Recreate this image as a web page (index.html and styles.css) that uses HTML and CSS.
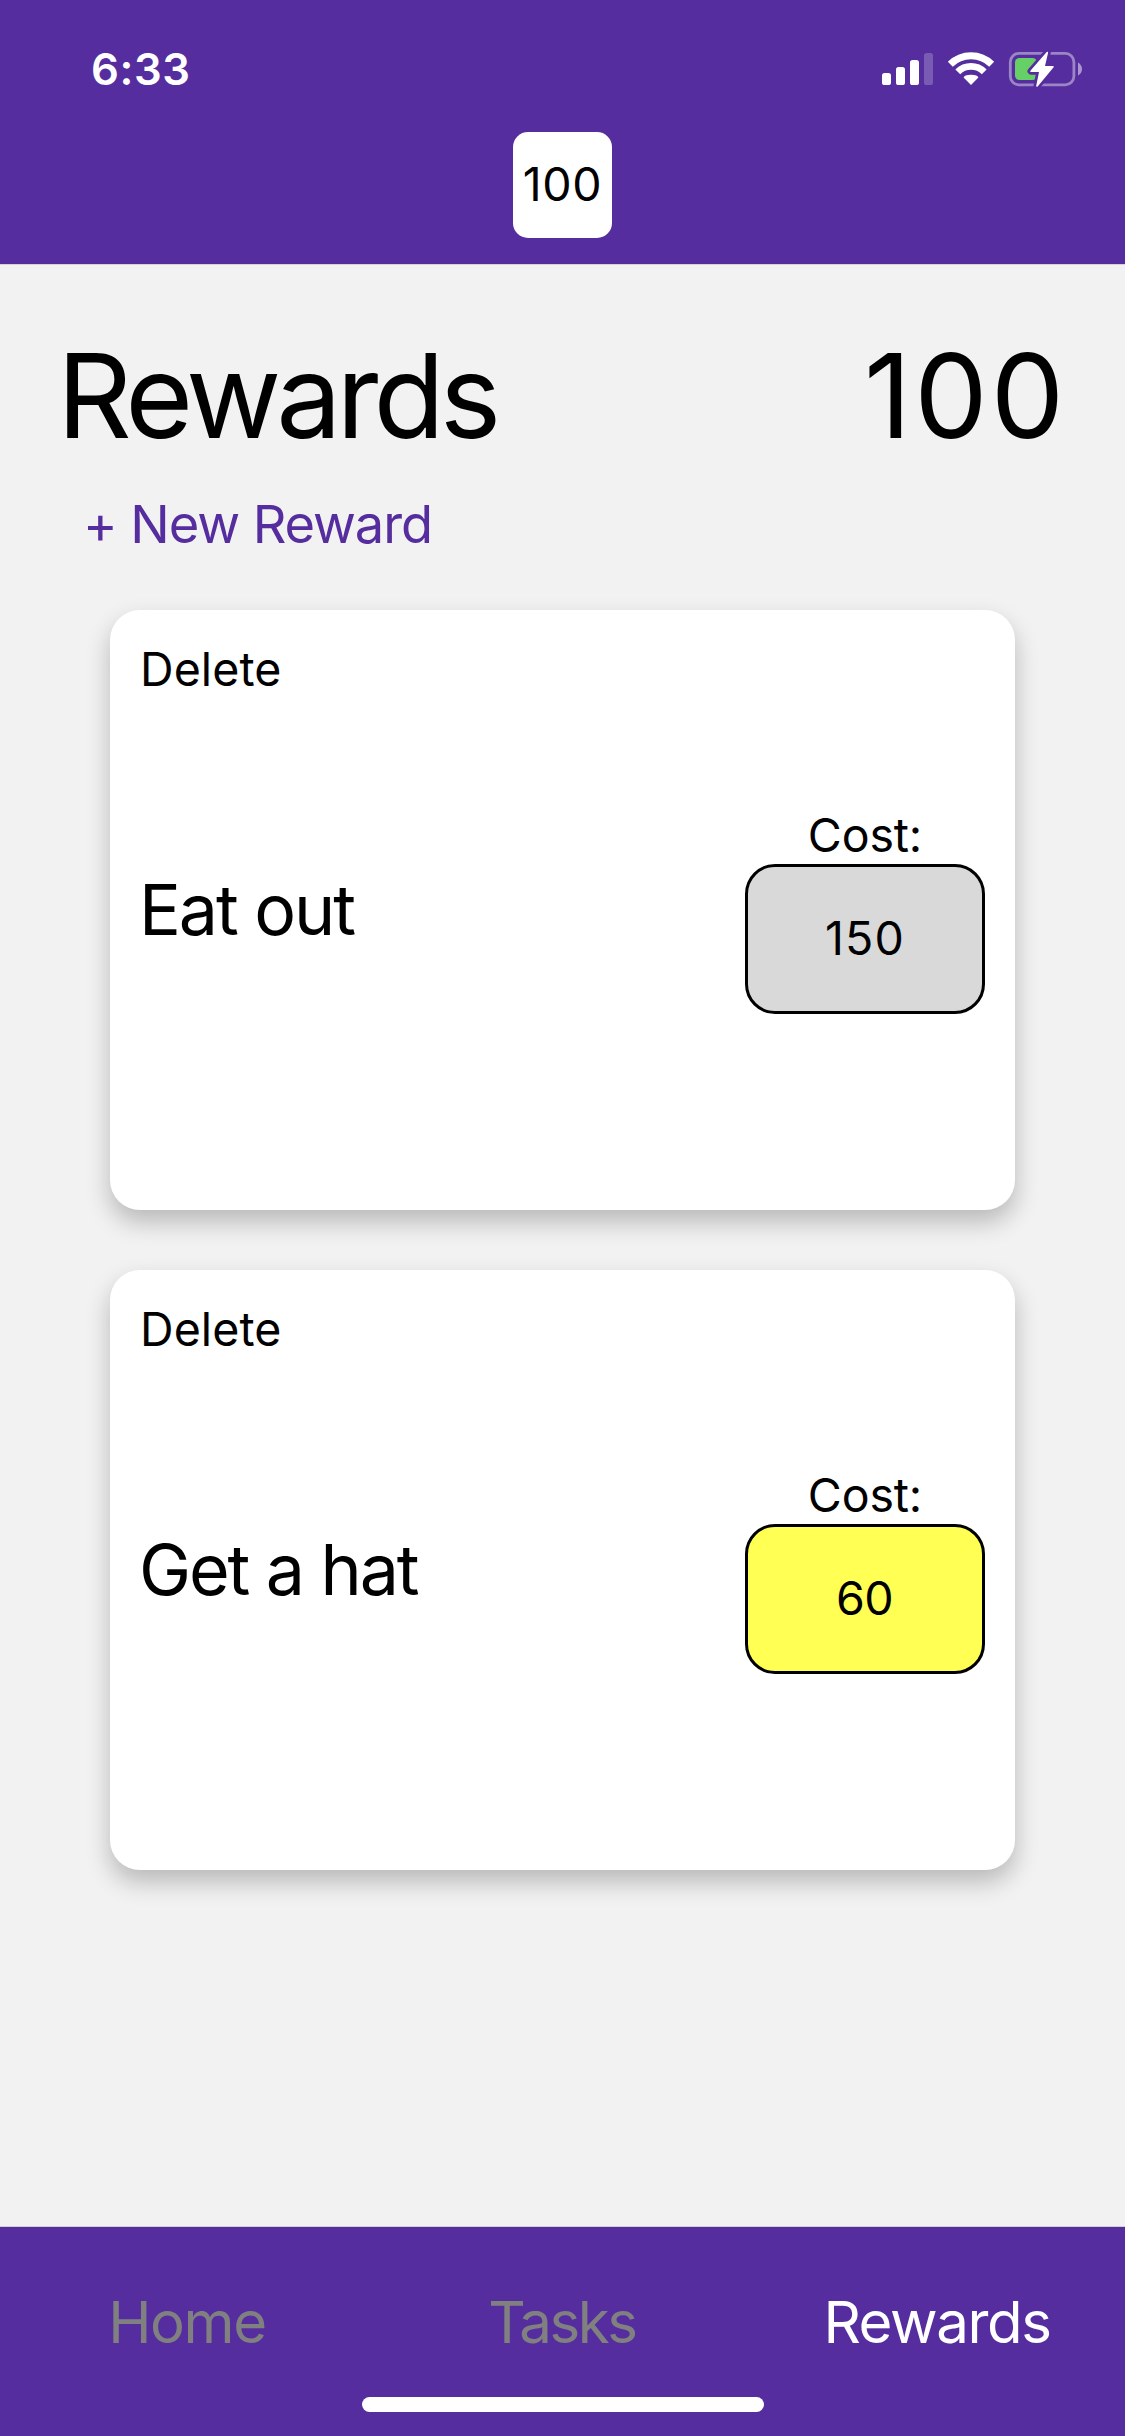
FILE: index.html
```html
<!DOCTYPE html>
<html lang="en">
<head>
<meta charset="utf-8">
<title>Rewards</title>
<link rel="stylesheet" href="styles.css">
</head>
<body>
<div class="app">
  <header class="header">
    <div class="status">
      <span class="time">6:33</span>
      <svg class="status-icons" width="202" height="40" viewBox="881 49 202 40" aria-hidden="true">
        <g fill="#fff">
          <rect x="882" y="73" width="9" height="12" rx="2.6"/>
          <rect x="896" y="67" width="9" height="18" rx="2.6"/>
          <rect x="910" y="60" width="9" height="25" rx="2.6"/>
          <rect x="924" y="53" width="9" height="32" rx="2.6" opacity=".22"/>
          <path d="M971 85 963.6 77.6Q964 74.8 971 74.7 978 74.8 978.4 77.6Z"/>
        </g>
        <g fill="none" stroke="#fff">
          <path d="M950.3 64.3A29.4 29.4 0 0 1 991.7 64.3" stroke-width="7"/>
          <path d="M957.8 71.8A18.7 18.7 0 0 1 984.2 71.8" stroke-width="6.8"/>
        </g>
        <rect x="1010.3" y="53.4" width="63.6" height="31.4" rx="8.5" fill="none" stroke="#fff" stroke-opacity=".42" stroke-width="2.8"/>
        <path d="M1078 62.5Q1082 65 1082 69T1078 75.5Z" fill="#fff" fill-opacity=".5"/>
        <rect x="1015" y="58" width="22" height="22" rx="4.5" fill="#66cf66"/>
        <path class="bolt-gap" d="M1047.3 52.5 1031 71.2H1040L1037 86 1053 66.8H1044Z"/>
        <path class="bolt" d="M1047.3 52.5 1031 71.2H1040L1037 86 1053 66.8H1044Z"/>
      </svg>
    </div>
    <div class="balance">100</div>
  </header>

  <main class="main">
    <div class="heading">
      <h1 class="title">Rewards</h1>
      <span class="points">100</span>
    </div>
    <a class="new-reward">+ New Reward</a>

    <div class="cards">
      <section class="card">
        <span class="delete">Delete</span>
        <div class="card-body">
          <h2 class="name">Eat out</h2>
          <div class="cost">
            <span class="cost-label">Cost:</span>
            <span class="price price-locked">150</span>
          </div>
        </div>
      </section>
      <section class="card">
        <span class="delete">Delete</span>
        <div class="card-body">
          <h2 class="name">Get a hat</h2>
          <div class="cost">
            <span class="cost-label">Cost:</span>
            <span class="price price-available">60</span>
          </div>
        </div>
      </section>
    </div>
  </main>

  <nav class="tabs">
    <a class="tab">Home</a>
    <a class="tab tab-tasks">Tasks</a>
    <a class="tab tab-active">Rewards</a>
    <span class="home-indicator"></span>
  </nav>
</div>
</body>
</html>
```
FILE: styles.css
```css
* {
  box-sizing: border-box;
}

body {
  margin: 0;
  font-family: Inter, "Liberation Sans", sans-serif;
  color: #000;
}

.app {
  width: 1125px;
  height: 2436px;
  display: flex;
  flex-direction: column;
  background: #f2f2f2;
}

.header {
  height: 265px;
  display: flex;
  flex-direction: column;
  align-items: center;
  background: #552d9e;
  border-bottom: 1px solid #d4d4d6;
}

.status {
  width: 100%;
  height: 132px;
  padding: 49px 42px 0 91px;
  display: flex;
  justify-content: space-between;
  align-items: flex-start;
}

.time {
  font-size: 43.6px;
  font-weight: 600;
  line-height: 42px;
  letter-spacing: 0.6px;
  color: #fff;
}

.status-icons {
  display: block;
}

.bolt-gap {
  fill: #552d9e;
  stroke: #552d9e;
  stroke-width: 7;
  stroke-linejoin: round;
}

.bolt {
  fill: #fff;
  stroke: #fff;
  stroke-width: 1.6;
  stroke-linejoin: round;
}

.balance {
  width: 99px;
  height: 106px;
  border-radius: 15px;
  background: #fff;
  font-size: 46.5px;
  line-height: 104px;
  letter-spacing: 0.7px;
  text-align: center;
}

.main {
  flex: 1;
  padding: 65px 58px 0 57px;
}

.heading {
  display: flex;
  justify-content: space-between;
  font-size: 116.4px;
  line-height: 132px;
}

.title {
  margin: 0;
  font-size: inherit;
  font-weight: 400;
  letter-spacing: -5px;
}

.points {
  letter-spacing: 2.9px;
}

.new-reward {
  display: block;
  margin: 30px 0 54px 26px;
  font-size: 52.4px;
  line-height: 64px;
  letter-spacing: -1.07px;
  color: #552d9e;
}

.cards {
  display: flex;
  flex-direction: column;
  gap: 60px;
  padding: 0 52px 0 53px;
}

.card {
  height: 600px;
  padding: 30px;
  display: grid;
  grid-template-rows: 58px 1fr 58px;
  border-radius: 30px;
  background: #fff;
  box-shadow: 0 12px 24px rgba(0, 0, 0, 0.24);
}

.delete {
  font-size: 46.5px;
  line-height: 58px;
  letter-spacing: 0.1px;
}

.card-body {
  display: flex;
  justify-content: space-between;
  align-items: center;
}

.name {
  margin: 0 0 0 -1px;
  font-size: 69.8px;
  font-weight: 400;
  line-height: 86px;
  letter-spacing: -2.1px;
}

.cost {
  width: 240px;
  display: flex;
  flex-direction: column;
  font-size: 46.5px;
  text-align: center;
}

.cost-label {
  line-height: 58px;
  letter-spacing: -0.15px;
}

.price {
  height: 150px;
  border: 3px solid #000;
  border-radius: 30px;
  line-height: 142px;
}

.price-locked {
  background: #d9d9d9;
  letter-spacing: 1.2px;
}

.price-available {
  background: #ffff54;
  padding-right: 1px;
  letter-spacing: -0.5px;
}

.tabs {
  position: relative;
  height: 210px;
  display: flex;
  border-top: 1px solid #d0d0d0;
  background: #552d9e;
}

.tab {
  flex: 1;
  font-size: 58.2px;
  line-height: 190px;
  letter-spacing: -1.4px;
  padding-right: 1px;
  text-align: center;
  color: #808080;
}

.tab-tasks {
  letter-spacing: -2.4px;
}

.tab-active {
  color: #fff;
}

/* System home indicator floats over the tab bar */
.home-indicator {
  position: absolute;
  left: 50%;
  bottom: 24px;
  width: 402px;
  height: 15px;
  margin-left: -201px;
  border-radius: 8px;
  background: #fff;
}
```
